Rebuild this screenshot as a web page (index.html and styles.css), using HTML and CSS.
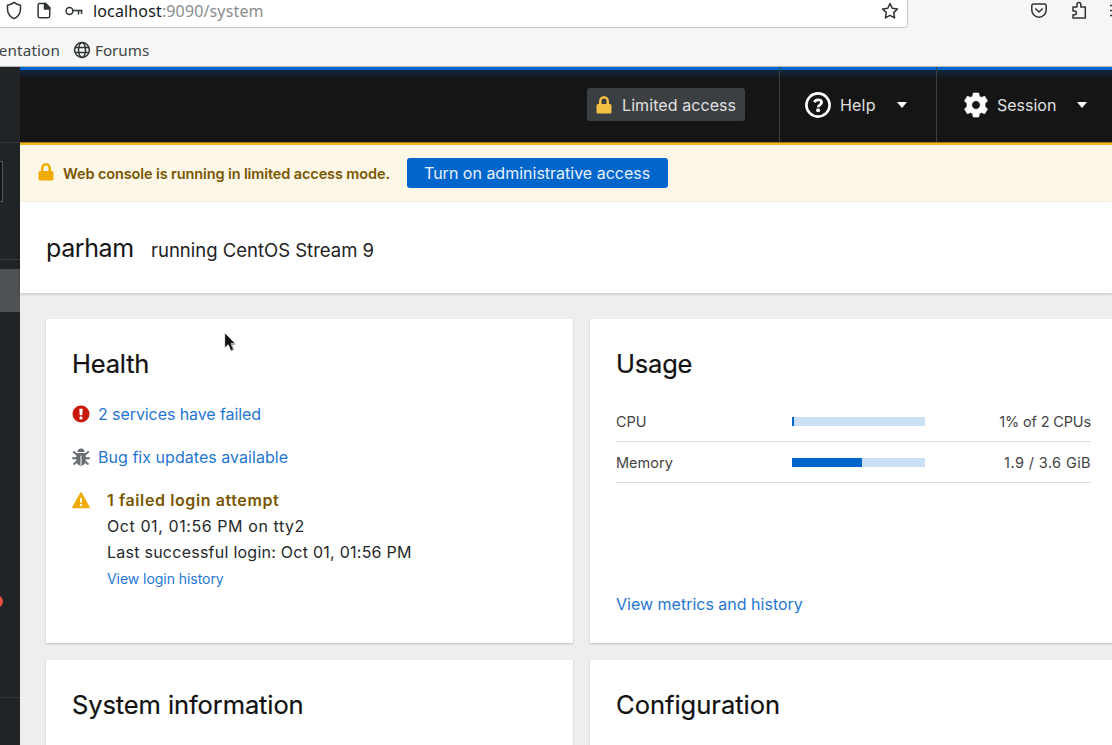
FILE: index.html
```html
<!DOCTYPE html>
<html lang="en">
<head>
<meta charset="utf-8">
<title>Overview - parham</title>
<link rel="stylesheet" href="styles.css">
</head>
<body>
<div class="browser">
  <div class="urlrow">
    <div class="urlbar">
      <svg class="i-shield" width="18" height="20" viewBox="0 0 18 20"><path d="M9 2.400C11 4 13.500 5 15.500 5.300V9C15.500 13.500 13.300 16.800 9 18.600C4.700 16.800 2.500 13.500 2.500 9V5.300C4.500 5 7 4 9 2.400Z"/></svg>
      <svg class="i-page" width="14" height="18" viewBox="0 0 14 18"><path d="M2.500 1.500H8.500L12.700 5.700V14A1.700 1.700 0 0 1 11 15.700H2.800A1.700 1.700 0 0 1 1.100 14V3.200A1.700 1.700 0 0 1 2.500 1.500Z"/><path class="solid" d="M7.500 1.500H8.500L12.700 5.700V7H7.500Z"/></svg>
      <svg class="i-key" width="19" height="12" viewBox="0 0 19 12"><circle cx="4.500" cy="5" r="3.400"/><path d="M8 4.500H17.500M13.500 4.500V8.500M16.500 4.500V8"/></svg>
      <span class="url"><b>localhost</b>:9090/system</span>
      <svg class="i-star" width="18" height="18" viewBox="0 0 18 18"><path d="M9 1.500L11.200 6.200L16.500 6.900L12.700 10.600L13.600 15.900L9 13.400L4.400 15.900L5.300 10.600L1.500 6.900L6.800 6.200Z"/></svg>
    </div>
    <svg class="i-pocket" width="18" height="18" viewBox="0 0 18 18"><path d="M3.500 3H14.500A1.700 1.700 0 0 1 16.200 4.700V9A7.200 7.200 0 0 1 1.800 9V4.700A1.700 1.700 0 0 1 3.500 3Z"/><path d="M5.300 7.500L9 11L12.700 7.500"/></svg>
    <svg class="i-ext" width="18" height="20" viewBox="0 0 18 20"><path d="M3 7H7V4.500A1.900 1.900 0 0 1 10.800 4.500V7H15.300V18H3V14.700H4.500A1.900 1.900 0 0 0 4.500 10.900H3Z"/></svg>
    <svg class="i-menu" width="2" height="18" viewBox="0 0 2 18"><path d="M0 4.500H2M0 9.500H2M0 14.500H2"/></svg>
  </div>
  <div class="bookmarks">
    <span class="bm-cut">mentation</span>
    <svg class="i-globe" width="18" height="18" viewBox="0 0 18 18"><circle cx="9" cy="9" r="7.400"/><ellipse cx="9" cy="9" rx="3.500" ry="7.400"/><path d="M2 6.500H16M2 11.500H16"/></svg>
    <span class="forums">Forums</span>
  </div>
</div>
<div class="app">
  <div class="side">
    <div class="side-top"></div>
    <div class="side-host"><div class="search"></div></div>
    <div class="side-nav"><div class="active"></div><div class="badge"></div></div>
    <div class="side-foot"></div>
  </div>
  <div class="main">
    <div class="masthead">
      <div class="limit-wrap"><div class="limited">
        <svg width="16" height="18" viewBox="0 0 16 18"><path class="gold-lt" fill-rule="evenodd" d="M14 8H13V5.400A5 5.400 0 0 0 3 5.400V8H2A1.500 1.500 0 0 0 .5 9.500V16A1.500 1.500 0 0 0 2 17.500H14A1.500 1.500 0 0 0 15.500 16V9.500A1.500 1.500 0 0 0 14 8ZM10.500 8H5.500V5.400A2.500 2.800 0 0 1 10.500 5.400Z"/></svg>
        <span>Limited access</span></div></div>
      <div class="menu help">
        <svg width="26" height="26" viewBox="0 0 26 26"><circle cx="13" cy="13" r="11.600" fill="none" stroke="#fff" stroke-width="2.600"/><path d="M9.400 10.300C10 8.500 11.300 7.800 13.100 7.800C15.100 7.800 16.600 8.900 16.600 10.500C16.600 12.900 13.200 12.700 13.200 15.200" fill="none" stroke="#fff" stroke-width="2.700"/><circle cx="13.100" cy="18.200" r="2" fill="#fff"/></svg>
        <span>Help</span><i class="caret"></i></div>
      <div class="menu session">
        <svg width="26" height="26" viewBox="0 0 26 26"><path fill="#fff" fill-rule="evenodd" d="M10.300 1H15.700L16.300 4.200L18.400 5.400L21.700 4.300L24.500 9L22 11.200V14.800L24.500 17L21.700 21.700L18.400 20.600L16.300 21.800L15.700 25H10.300L9.700 21.800L7.600 20.600L4.300 21.700L1.500 17L4 14.800V11.200L1.500 9L4.300 4.300L7.600 5.400L9.700 4.200ZM13 8.700A4.300 4.300 0 1 0 13 17.300A4.300 4.300 0 0 0 13 8.700Z" stroke="#fff" stroke-width=".7" stroke-linejoin="round"/></svg>
        <span>Session</span><i class="caret"></i></div>
    </div>
    <div class="banner">
      <svg width="16" height="18" viewBox="0 0 16 18"><path class="gold" fill-rule="evenodd" d="M14 8H13V5.400A5 5.400 0 0 0 3 5.400V8H2A1.500 1.500 0 0 0 .5 9.500V16A1.500 1.500 0 0 0 2 17.500H14A1.500 1.500 0 0 0 15.500 16V9.500A1.500 1.500 0 0 0 14 8ZM10.500 8H5.500V5.400A2.500 2.800 0 0 1 10.500 5.400Z"/></svg>
      <span class="banner-text">Web console is running in limited access mode.</span>
      <div class="btn"><span>Turn on administrative access</span></div>
    </div>
    <div class="hosthead"><span class="host">parham</span><span class="os">running CentOS Stream 9</span></div>
    <div class="grid">
      <section class="card">
        <h2 class="h-health">Health</h2>
        <div class="row row1">
          <svg width="18" height="18" viewBox="0 0 18 18"><circle cx="9" cy="9" r="8.500" fill="#c9190b"/><path d="M7.300 3.800H10.700L10.300 10.200H7.700Z" fill="#fff"/><circle cx="9" cy="12.900" r="1.600" fill="#fff"/></svg>
          <a class="l-services">2 services have failed</a></div>
        <div class="row row2">
          <svg width="18" height="18" viewBox="0 0 18 18"><path fill="#6a6e73" d="M5.500 4A3.500 3.500 0 0 1 12.500 4ZM4.300 5H13.700V13A4.700 4.700 0 0 1 4.300 13Z"/><path d="M1.300 3.500L5 6.700M16.700 3.500L13 6.700M.2 10.200H5M13 10.200H17.800M1.500 16.500L5.500 13M16.500 16.500L12.500 13" stroke="#6a6e73" stroke-width="1.900"/><path d="M9 7.500V17" stroke="#fff" stroke-width="1"/></svg>
          <a class="l-bug">Bug fix updates available</a></div>
        <div class="login">
          <svg width="18" height="17" viewBox="0 0 18 17"><path d="M9 1L17 15.500H1Z" fill="#f0ab00" stroke="#f0ab00" stroke-width="1.600" stroke-linejoin="round"/><path d="M9 6V10.600" stroke="#fff" stroke-width="2"/><circle cx="9" cy="13" r="1.200" fill="#fff"/></svg>
          <div class="login-text">
            <div><span class="fail">1 failed login attempt</span></div>
            <div><span class="t-a">Oct 01, 01:56 PM on tty2</span></div>
            <div><span class="t-b">Last successful login: Oct 01, 01:56 PM</span></div>
            <div><a class="l-hist">View login history</a></div>
          </div>
        </div>
      </section>
      <section class="card">
        <h2 class="h-usage">Usage</h2>
        <div class="usage">
          <div class="u-row"><span class="u-cpu">CPU</span><div class="bar"><div style="width:1.500%"></div></div><span class="u-cpuv">1% of 2 CPUs</span></div>
          <div class="u-row"><span class="u-mem">Memory</span><div class="bar"><div style="width:52.800%"></div></div><span class="u-memv">1.9 / 3.6 GiB</span></div>
        </div>
        <a class="l-metrics">View metrics and history</a>
      </section>
      <section class="card"><h2 class="h-sys">System information</h2></section>
      <section class="card"><h2 class="h-conf">Configuration</h2></section>
    </div>
  </div>
</div>
<svg class="cursor" width="12" height="20" viewBox="0 0 12 20"><path d="M.7 .7V16L4.200 12.700L6.800 18.800L9.500 17.600L7 11.700H11.500Z" fill="#111" stroke="#fff" stroke-width=".8"/><path d="M7.400 12.300H11.300M7.400 12.300L9.600 17.600L7 18.900" fill="none" stroke="#777" stroke-width=".8"/></svg>
</body>
</html>
```
FILE: styles.css
```css
* { box-sizing: border-box; }
html, body { height: 100%; }
body { margin: 0; overflow: hidden; display: flex; flex-direction: column; font-family: Inter, "Liberation Sans", sans-serif; font-size: 16px; color: #26282a; background: #eee; }
svg { flex: none; display: block; }
a { color: #1f76d2; }
span, a { white-space: nowrap; }

.browser { height: 67px; flex: none; background: #f6f6f4; border-bottom: 1px solid #b4b5b5; font-family: "Noto Sans", sans-serif; }
.browser svg { fill: none; stroke: #2e3436; stroke-width: 1.5; stroke-linejoin: round; }
.browser .solid { fill: #2e3436; }
.urlrow { display: flex; height: 28px; align-items: flex-start; }
.urlbar { width: 908px; flex: none; height: 28px; display: flex; align-items: flex-start; background: #fff; border: solid #c9c7c4; border-width: 0 1px 1px 0; border-radius: 0 0 4px 0; padding-left: 5px; }
.i-page { margin: 2px 0 0 14px; }
.i-key { margin: 6px 0 0 14px; }
.i-star { margin: 2px 8px 0 auto; }
.url { margin-left: 9px; font-size: 16px; line-height: 22px; color: #8b8d8e; letter-spacing: .14px; }
.url b { font-weight: 400; color: #15191b; }
.i-pocket { margin: 1px 0 0 122px; }
.i-ext { margin: 0 0 0 22px; }
.i-menu { margin: 1px 0 0 22px; }
.bookmarks { height: 38px; display: flex; align-items: center; padding-top: 5px; font-size: 15.200px; color: #3d4447; }
.bm-cut { width: 60px; display: flex; justify-content: flex-end; letter-spacing: .15px; }
.i-globe { margin: 0 4px 0 13px; }

.app { flex: 1; min-height: 0; display: flex; overflow: hidden; }
.side { width: 20px; flex: none; background: #212427; display: flex; flex-direction: column; overflow: hidden; }
.side-top { height: 76px; border-bottom: 1px solid #33363a; }
.side-host { height: 117px; border-bottom: 1px solid #3c3f42; padding-top: 18px; }
.search { width: 3px; height: 41px; background: #151515; border: 1px solid #55585b; border-left: 0; }
.side-nav { height: 438px; padding-top: 9px; border-bottom: 1px solid #33363a; }
.active { height: 43px; background: #4f5255; }
.badge { width: 16px; height: 13px; border-radius: 7px; background: #f0503f; margin: 283px 0 0 -13px; }
.side-top, .side-host, .side-nav { flex: none; }

.main { flex: 1; min-width: 0; display: flex; flex-direction: column; }
.masthead { height: 75px; flex: none; display: flex; justify-content: flex-end; color: #e0e0e0; background: linear-gradient(#06c 0 3px, #102740 3px, #151515 12px); }
.limit-wrap { width: 192px; padding-top: 21px; }
.limited { width: 158px; height: 33px; border-radius: 3px; background: #3c3f42; display: flex; align-items: center; padding-left: 9px; gap: 10px; letter-spacing: .08px; }
.gold-lt { fill: #f4c145; }
.gold { fill: #f0ab00; }
.menu { border-left: 1px solid #3c3f42; display: flex; align-items: center; }
.help { width: 157px; padding-left: 25px; }
.help span { margin-left: 9px; width: 37px; letter-spacing: .2px; }
.session { width: 176px; padding-left: 26px; }
.session span { margin-left: 8px; width: 60px; }
.caret { border: solid transparent; border-width: 6px 5.500px 0; border-top-color: #fff; margin-left: 20px; }
.banner { height: 60px; flex: none; background: linear-gradient(#a97800 0 1px, #f3b92d 1px 3px, #fdf7e7 3px); display: flex; align-items: flex-start; padding: 16px 0 0 18px; }
.banner svg { margin-top: 5px; }
.banner-text { width: 344px; margin-left: 9px; line-height: 31px; font-size: 14.500px; font-weight: 600; letter-spacing: -.11px; color: #795600; }
.btn { width: 261px; height: 30px; border-radius: 3px; background: #06c; color: #e8f1fb; display: flex; align-items: center; padding-left: 17px; }
.hosthead { height: 91px; flex: none; background: #fff; box-shadow: 0 1px 3px #0003; display: flex; align-items: baseline; padding: 29px 0 0 26px; }
.host { font-size: 25px; width: 105px; line-height: 34px; letter-spacing: -.4px; color: #151515; }
.os { font-size: 18.500px; color: #222; }
.grid { flex: 1; min-height: 0; display: grid; grid-template-columns: 527px 527px; grid-template-rows: 324px 1fr; gap: 17px; padding: 26px 0 0 26px; }
.card { background: #fff; box-shadow: 0 1px 2px #0003; padding: 25px 26px 0; display: flex; flex-direction: column; align-items: flex-start; }
h2 { margin: 0; font-size: 25.500px; font-weight: 400; line-height: 40px; color: #111; -webkit-text-stroke: .2px #111; white-space: nowrap; }
.h-health, .h-usage { letter-spacing: -.2px; }
.h-sys { letter-spacing: -.1px; }
.row { display: flex; align-items: center; gap: 8px; height: 26px; }
.row1 { margin-top: 17px; }
.row2 { margin-top: 17px; }
.l-services { letter-spacing: -.08px; }
.l-bug { letter-spacing: .04px; }
.login { display: flex; gap: 17px; margin-top: 17px; line-height: 26px; }
.login svg { margin-top: 5px; }
.fail { font-weight: 600; letter-spacing: .6px; color: #795600; }
.t-a { letter-spacing: .58px; }
.t-b { letter-spacing: .25px; }
.l-hist { font-size: 14px; letter-spacing: -.05px; }
.usage { width: 475px; margin-top: 17px; font-size: 14.500px; color: #444; }
.u-row { height: 41px; border-bottom: 1px solid #ddd; display: grid; grid-template-columns: 176px 133px 1fr; align-items: center; }
.u-row > :last-child { justify-self: end; }
.u-cpuv { letter-spacing: -.16px; }
.u-memv { letter-spacing: .4px; }
.bar { height: 9px; background: #cce0f5; }
.bar div { height: 100%; background: #06c; }
.l-metrics { margin-top: 108px; line-height: 26px; }
.cursor { position: absolute; left: 224px; top: 332px; }
```
